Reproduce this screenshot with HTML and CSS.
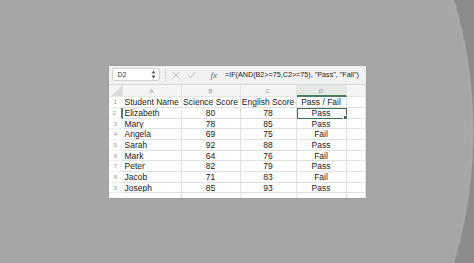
FILE: index.html
```html
<!DOCTYPE html>
<html lang="en">
<head>
  <meta charset="UTF-8" />
  <title>Pass / Fail sheet</title>
  <link rel="stylesheet" href="styles.css">
</head>
<body>
  <div class="sheet">
    <div class="formula-bar">
      <div class="name-box">
        <span>D2</span>
        <svg class="spin" width="5" height="9" viewBox="0 0 5 9"><path d="M2.5 0.5 L4.5 3.5 L0.5 3.5 Z M2.5 8.5 L4.5 5.5 L0.5 5.5 Z" fill="#555"/></svg>
      </div>
      <div class="bar-icons">
        <svg class="no" width="8" height="8" viewBox="0 0 8 8"><path d="M1 1 L7 7 M7 1 L1 7" stroke="#b9b9b9" stroke-width="0.9" fill="none"/></svg>
        <svg class="ok" width="9" height="8" viewBox="0 0 9 8"><path d="M1 4.2 L3.4 6.8 L8 1" stroke="#b9b9b9" stroke-width="0.9" fill="none"/></svg>
        <span class="fx">fx</span>
      </div>
      <div class="formula">=IF(AND(B2&gt;=75,C2&gt;=75), "Pass", "Fail")</div>
    </div>

    <div class="grid">
      <div class="hd corner"></div><div class="hd">A</div><div class="hd">B</div><div class="hd">C</div><div class="hd active">D</div><div class="hd"></div>

      <div class="rn">1</div><div class="cell">Student Name</div><div class="cell mid">Science Score</div><div class="cell mid">English Score</div><div class="cell mid">Pass / Fail</div><div class="cell"></div>
      <div class="rn active-row">2</div><div class="cell">Elizabeth</div><div class="cell mid">80</div><div class="cell mid">78</div><div class="cell mid selected">Pass</div><div class="cell"></div>
      <div class="rn">3</div><div class="cell">Mary</div><div class="cell mid">78</div><div class="cell mid">85</div><div class="cell mid">Pass</div><div class="cell"></div>
      <div class="rn">4</div><div class="cell">Angela</div><div class="cell mid">69</div><div class="cell mid">75</div><div class="cell mid">Fail</div><div class="cell"></div>
      <div class="rn">5</div><div class="cell">Sarah</div><div class="cell mid">92</div><div class="cell mid">88</div><div class="cell mid">Pass</div><div class="cell"></div>
      <div class="rn">6</div><div class="cell">Mark</div><div class="cell mid">64</div><div class="cell mid">76</div><div class="cell mid">Fail</div><div class="cell"></div>
      <div class="rn">7</div><div class="cell">Peter</div><div class="cell mid">82</div><div class="cell mid">79</div><div class="cell mid">Pass</div><div class="cell"></div>
      <div class="rn">8</div><div class="cell">Jacob</div><div class="cell mid">71</div><div class="cell mid">83</div><div class="cell mid">Fail</div><div class="cell"></div>
      <div class="rn">9</div><div class="cell">Joseph</div><div class="cell mid">85</div><div class="cell mid">93</div><div class="cell mid">Pass</div><div class="cell"></div>
      <div class="rn"></div><div class="cell"></div><div class="cell"></div><div class="cell"></div><div class="cell"></div><div class="cell"></div>
    </div>
  </div>
</body>
</html>
```

FILE: styles.css
```css
html, body {
  margin: 0;
  padding: 0;
  height: 100%;
}

body {
  display: flex;
  justify-content: center;
  align-items: center;
  font-family: 'Liberation Sans', Arial, sans-serif;
  background: radial-gradient(circle 460px at 13px 131px, #a7a6a6 458px, #abaaaa 459.5px, #8d8c8c 461px);
  overflow: hidden;
}

.sheet {
  width: 257px;
  height: 132px;
  background: #fff;
  overflow: hidden;
  box-shadow: 0 0 1px rgba(0, 0, 0, 0.2);
}

.formula-bar {
  display: flex;
  align-items: center;
  height: 19px;
  background: #f1f1f1;
  border-bottom: 1px solid #d9d9d9;
  box-sizing: border-box;
}

.name-box {
  display: flex;
  align-items: center;
  justify-content: space-between;
  width: 48px;
  height: 13px;
  margin-left: 3px;
  padding: 0 3px 0 5px;
  box-sizing: border-box;
  background: #fff;
  border: 1px solid #d4d4d4;
  border-radius: 2px;
  font-size: 7px;
  color: #333;
}

.bar-icons {
  display: flex;
  align-items: center;
  margin-left: 5px;
  border-left: 1px dotted #d0d0d0;
  padding-left: 6px;
  height: 12px;
}

.bar-icons .ok {
  margin-left: 7px;
}

.fx {
  margin-left: 15px;
  font-family: 'Liberation Serif', serif;
  font-style: italic;
  font-size: 9px;
  color: #666;
}

.formula {
  margin-left: 8px;
  font-size: 7.2px;
  color: #1a1a1a;
  white-space: nowrap;
}

.grid {
  display: grid;
  grid-template-columns: 14px 59px 59px 56px 50px 19px;
  grid-template-rows: 12.7px repeat(10, 10.7px);
  font-size: 8.5px;
  color: #1a1a1a;
}

.grid > div {
  box-sizing: border-box;
  border-right: 1px solid #e1e1e1;
  border-bottom: 1px solid #e1e1e1;
  white-space: nowrap;
  overflow: hidden;
  line-height: 10px;
}

.hd, .rn {
  font-size: 6px;
  color: #999;
  text-align: center;
}

.grid .hd {
  background: #f4f4f4;
  line-height: 12px;
  border-color: #e6e6e6;
}

.grid .hd.active {
  background: #e4e9e6;
  border-bottom: 2px solid #4f7d64;
}

.grid .corner {
  background: linear-gradient(135deg, #f4f4f4 55%, #dcdcdc 56%);
}

.grid .rn {
  border-right: none;
  border-bottom-color: #eeeeee;
}

.grid .rn.active-row {
  border-right: 2px solid #4f7d64;
}

.cell {
  padding-left: 2px;
}

.grid .mid {
  padding: 0;
  text-align: center;
}

.grid .selected {
  position: relative;
  overflow: visible;
  outline: 1.5px solid #3f6e57;
  outline-offset: -1px;
}

.selected::after {
  content: "";
  position: absolute;
  right: -2px;
  bottom: -2px;
  width: 3px;
  height: 3px;
  background: #3f6e57;
  border: 0.5px solid #fff;
}
```
